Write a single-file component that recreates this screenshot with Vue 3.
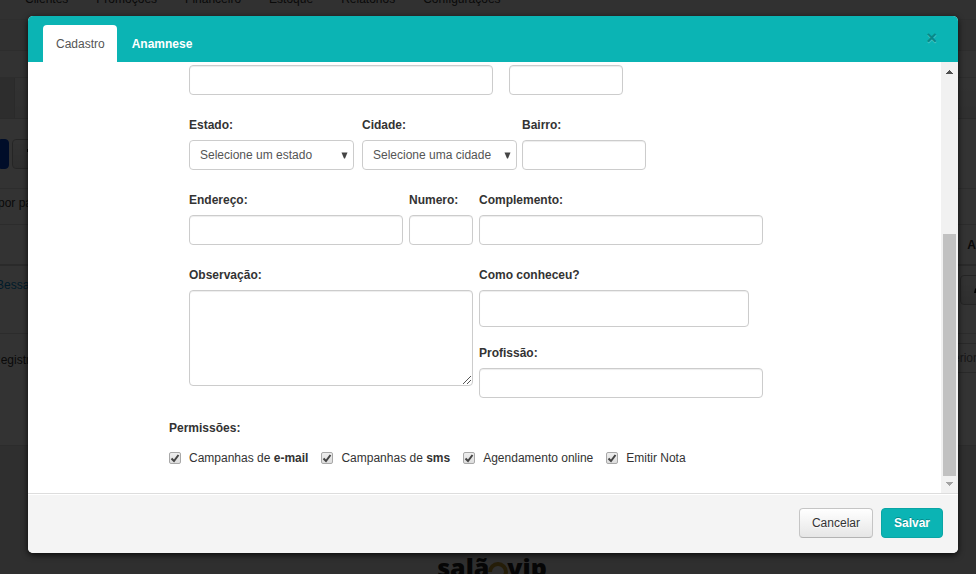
<script setup>
import { ref } from 'vue'

const menu = ['Clientes', 'Promoções', 'Financeiro', 'Estoque', 'Relatórios', 'Configurações']

const form = ref({
  contato: '',
  cep: '',
  estado: '',
  cidade: '',
  bairro: '',
  endereco: '',
  numero: '',
  complemento: '',
  observacao: '',
  origem: '',
  profissao: ''
})

const permissions = ref([
  { id: 'perm-email', text: 'Campanhas de ', strong: 'e-mail', checked: true },
  { id: 'perm-sms', text: 'Campanhas de ', strong: 'sms', checked: true },
  { id: 'perm-online', text: 'Agendamento online', strong: '', checked: true },
  { id: 'perm-nota', text: 'Emitir Nota', strong: '', checked: true }
])
</script>

<template>
  <div class="screen">
    <div class="page">
      <nav class="menu">
        <a v-for="(item, i) in menu" :key="item" href="#" :class="{ current: i === 0 }">{{ item }}</a>
      </nav>
      <div class="band band-plain"></div>
      <div class="band band-light"></div>
      <div class="toolbar"><span class="toolbar-tab"></span></div>
      <div class="actions">
        <button class="action primary" type="button" aria-label="Novo"></button>
        <button class="action" type="button" aria-label="Excluir">
          <svg width="14" height="14" viewBox="0 0 14 14"><path d="M2 3h3V1h4v2h4v3H2zM4 5h8l-1 8H4z" /></svg>
        </button>
      </div>
      <div class="length">por página</div>
      <div class="row head"><b>A</b></div>
      <div class="row item">
        <a href="#">Bessa</a>
        <button class="edit" type="button" aria-label="Editar">
          <svg width="14" height="14" viewBox="0 0 14 14"><path d="M1 13l1-4 7-7 4 4-7 7z" /></svg>
        </button>
      </div>
      <div class="row info">
        <span>Registros</span>
        <span class="pager">Anterior</span>
      </div>
      <footer class="brand">
        <span>salã</span>
        <svg width="22" height="24" viewBox="0 0 22 24"><path d="M3 15a8 8 0 1 1 16 0a8 8 0 0 1-8 7" /></svg>
        <span>vip</span>
      </footer>
    </div>

    <div class="backdrop">
      <section class="modal" role="dialog" aria-label="Cadastro">
        <header class="modal-head">
          <a class="tab active" href="#">Cadastro</a>
          <a class="tab" href="#">Anamnese</a>
          <button class="close" type="button" aria-label="Fechar">×</button>
        </header>

        <div class="modal-body">
          <form class="form">
            <div class="fields">
              <div class="line wide">
                <input v-model="form.contato" class="w304" type="text" aria-label="Contato" />
                <input v-model="form.cep" class="w114" type="text" aria-label="CEP" />
              </div>

              <div class="line places">
                <div class="field state">
                  <label for="estado">Estado:</label>
                  <div class="select">
                    <select id="estado" v-model="form.estado">
                      <option value="">Selecione um estado</option>
                    </select>
                    <svg width="7" height="7" viewBox="0 0 7 7"><path d="M0.500 0.500h6L4 6.500H3z" /></svg>
                  </div>
                </div>
                <div class="field city">
                  <label for="cidade">Cidade:</label>
                  <div class="select">
                    <select id="cidade" v-model="form.cidade">
                      <option value="">Selecione uma cidade</option>
                    </select>
                    <svg width="7" height="7" viewBox="0 0 7 7"><path d="M0.500 0.500h6L4 6.500H3z" /></svg>
                  </div>
                </div>
                <div class="field w124">
                  <label for="bairro">Bairro:</label>
                  <input id="bairro" v-model="form.bairro" type="text" />
                </div>
              </div>

              <div class="line">
                <div class="field w214">
                  <label for="endereco">Endereço:</label>
                  <input id="endereco" v-model="form.endereco" type="text" />
                </div>
                <div class="field w64">
                  <label for="numero">Numero:</label>
                  <input id="numero" v-model="form.numero" type="text" />
                </div>
                <div class="field w284">
                  <label for="complemento">Complemento:</label>
                  <input id="complemento" v-model="form.complemento" type="text" />
                </div>
              </div>

              <div class="line">
                <div class="field w284">
                  <label for="observacao">Observação:</label>
                  <div class="area">
                    <textarea id="observacao" v-model="form.observacao"></textarea>
                    <svg width="10" height="10" viewBox="0 0 10 10"><path d="M1 9L9 1M5 9L9 5" /></svg>
                  </div>
                </div>
                <div class="stack w284">
                  <div class="field">
                    <label for="origem">Como conheceu?</label>
                    <input id="origem" v-model="form.origem" class="tall" type="text" />
                  </div>
                  <div class="field">
                    <label for="profissao">Profissão:</label>
                    <input id="profissao" v-model="form.profissao" type="text" />
                  </div>
                </div>
              </div>
            </div>

            <fieldset class="permissions">
              <legend>Permissões:</legend>
              <div class="checks">
                <label v-for="p in permissions" :key="p.id" :for="p.id">
                  <span class="box">
                    <input :id="p.id" v-model="p.checked" type="checkbox" />
                    <svg v-if="p.checked" width="12" height="12" viewBox="0 0 12 12"><path d="M2.500 6.500L5 9L9.500 3" /></svg>
                  </span>
                  <span>{{ p.text }}<b v-if="p.strong">{{ p.strong }}</b></span>
                </label>
              </div>
            </fieldset>
          </form>

          <div class="scrollbar" aria-hidden="true">
            <svg class="up" width="7" height="4" viewBox="0 0 7 4"><path d="M3 0h1v1h1v1h1v1h1v1H0V3h1V2h1V1h1z" /></svg>
            <div class="thumb"></div>
            <svg class="down" width="7" height="4" viewBox="0 0 7 4"><path d="M0 0h7v1H6v1H5v1H4v1H3V3H2V2H1V1H0z" /></svg>
          </div>
        </div>

        <footer class="modal-foot">
          <button class="btn" type="button">Cancelar</button>
          <button class="btn save" type="button">Salvar</button>
        </footer>
      </section>
    </div>
  </div>
</template>

<style>
body {
  background: #e8e8e8;
  overflow: hidden;
}
</style>

<style scoped>
.screen {
  position: relative;
  height: 100vh;
  overflow: hidden;
  font: 12px/20px "Liberation Sans", Arial, sans-serif;
  color: #333;
}
.screen *,
.screen *::before {
  box-sizing: border-box;
}
a {
  text-decoration: none;
}
input,
select,
textarea,
button {
  margin: 0;
  font: inherit;
}

/* Page under the dialog */
.page {
  background: #fff;
}
.menu {
  display: flex;
  gap: 28px;
  height: 20px;
  padding-left: 25px;
  background: #f4f4f4;
  border-bottom: 1px solid #e4e4e4;
}
.menu a {
  height: 19px;
  margin-top: -11px;
  color: #333;
}
.band {
  border-bottom: 1px solid #e0e0e0;
}
.band-plain {
  height: 31px;
  background: #f0f0f0;
}
.band-light {
  height: 27px;
  background: #fafafa;
}
.toolbar {
  display: flex;
  height: 41px;
  background: linear-gradient(#fafafa, #eee);
  border-bottom: 1px solid #d8d8d8;
}
.toolbar-tab {
  width: 15px;
  background: #e0e0e0;
  border-right: 1px solid #d0d0d0;
}
.actions {
  display: flex;
  gap: 3px;
  height: 70px;
  padding-top: 20px;
  border-bottom: 1px solid #e0e0e0;
}
.action {
  width: 40px;
  height: 30px;
  padding: 4px 10px 0;
  background: linear-gradient(#fff, #e6e6e6);
  border: 1px solid #bbb;
  border-radius: 4px;
}
.action.primary {
  width: 9px;
  padding: 0;
  background: #0044cc;
  border-color: #0044cc;
  border-radius: 0 4px 4px 0;
}
.length {
  height: 36px;
  padding-top: 4px;
  margin-left: -2px;
  border-bottom: 1px solid #ddd;
}
.row {
  display: flex;
  justify-content: space-between;
  border-bottom: 1px solid #ddd;
}
.head {
  height: 41px;
  justify-content: flex-end;
  align-items: center;
  border-bottom: 2px solid #d0d0d0;
}
.item {
  height: 68px;
  padding-top: 9px;
  margin-left: -4px;
}
.item a {
  color: #08c;
}
.edit {
  width: 40px;
  height: 30px;
  margin-right: -24px;
  background: linear-gradient(#fff, #e6e6e6);
  border: 1px solid #bbb;
  border-radius: 4px;
}
.info {
  height: 112px;
  padding-top: 9px;
  margin-left: -8px;
}
.info span {
  padding-top: 7px;
}
.info .pager {
  height: 30px;
  margin-right: -14px;
  padding: 4px 12px;
  color: #777;
  border: 1px solid #ccc;
}
.brand {
  display: flex;
  justify-content: center;
  height: 140px;
  padding: 106px 0 0 8px;
  background: #e8e8e8;
  font: 800 25px/30px "Open Sans", sans-serif;
  color: #222;
}
.brand svg {
  margin: 5px -2px 0;
  fill: none;
  stroke: #b8902a;
  stroke-width: 4;
}

/* Dialog */
.backdrop {
  position: absolute;
  inset: 0;
  padding: 16px 18px 0 28px;
  background: rgba(0, 0, 0, 0.8);
}
.modal {
  overflow: hidden;
  background: #fff;
  border-radius: 5px;
  box-shadow: 0 2px 6px rgba(0, 0, 0, 0.8);
}
.modal-head {
  display: flex;
  align-items: flex-end;
  height: 46px;
  padding: 0 15px;
  background: #0bb4b4;
}
.tab {
  height: 37px;
  padding: 9px 12px 0 13px;
  font-weight: bold;
  color: #fff;
}
.tab + .tab {
  margin-left: 2px;
}
.tab.active {
  font-weight: normal;
  color: #555;
  background: #fff;
  border-radius: 4px 4px 0 0;
}
.close {
  align-self: flex-start;
  margin: 12px 6px 0 auto;
  padding: 0;
  background: none;
  border: 0;
  font-size: 18px;
  font-weight: bold;
  line-height: 20px;
  color: #088888;
  text-shadow: 0 1px 0 #4cc8c8;
}
.modal-body {
  display: flex;
}
.form {
  flex: 0 1 631px;
  margin: 0 auto;
  padding: 3px 0 25px;
}
.fields {
  display: flex;
  flex-direction: column;
  gap: 20px;
  padding-left: 20px;
}
.line {
  display: flex;
  gap: 6px;
}
.line.wide {
  gap: 16px;
}
.line.places {
  gap: 5px;
}
.field label {
  display: block;
  margin-bottom: 5px;
  font-weight: bold;
}
.field input,
.field select {
  width: 100%;
}
.form input[type="text"],
select,
textarea {
  display: block;
  height: 30px;
  padding: 4px 6px;
  color: #555;
  background: #fff;
  border: 1px solid #ccc;
  border-radius: 4px;
  box-shadow: inset 0 1px 1px rgba(0, 0, 0, 0.075);
}
.form input.tall {
  width: 270px;
  height: 37px;
}
.select,
.area,
.box {
  display: grid;
}
.select > *,
.area > *,
.box > * {
  grid-area: 1 / 1;
}
select {
  appearance: none;
  padding-left: 10px;
  box-shadow: none;
}
.select svg {
  align-self: center;
  justify-self: end;
  margin-right: 6px;
  fill: #444;
  pointer-events: none;
}
textarea {
  width: 100%;
  height: 96px;
  resize: none;
}
.area svg {
  align-self: end;
  justify-self: end;
  margin: 1px;
  fill: none;
  stroke: #555;
  pointer-events: none;
}
.stack {
  display: flex;
  flex-direction: column;
  gap: 16px;
}
.w304 { width: 304px; }
.w284 { width: 284px; }
.w214 { width: 214px; }
.w124 { width: 124px; }
.w114 { width: 114px; }
.w64 { width: 64px; }
.state {
  width: 165px;
  margin-right: 3px;
}
.city {
  width: 155px;
}
.permissions {
  margin: 20px 0 0;
  padding: 0;
  border: 0;
}
legend {
  padding: 0;
  font-weight: bold;
}
.checks {
  display: flex;
  gap: 13px;
  padding-top: 10px;
}
.checks label {
  display: flex;
  align-items: center;
  gap: 8px;
}
.box input {
  appearance: none;
  width: 12px;
  height: 12px;
  background: linear-gradient(#eee, #ddd);
  border: 1px solid #a8a8a8;
  border-radius: 2px;
}
.box svg {
  fill: none;
  stroke: #444;
  stroke-width: 2;
  pointer-events: none;
}
.scrollbar {
  display: flex;
  flex-direction: column;
  align-items: center;
  width: 17px;
  padding: 8px 0 7px;
  background: #f1f1f1;
}
.up {
  fill: #505050;
}
.down {
  fill: #a3a3a3;
}
.thumb {
  width: 13px;
  height: 242px;
  margin: auto 0 6px;
  background: #c1c1c1;
}
.modal-foot {
  display: flex;
  justify-content: flex-end;
  gap: 8px;
  padding: 14px 15px 15px;
  background: #f4f4f4;
  border-top: 1px solid #ddd;
  box-shadow: inset 0 1px 0 #fff;
}
.btn {
  height: 30px;
  padding: 4px 12px;
  line-height: 20px;
  color: #333;
  background: linear-gradient(#fff, #e6e6e6);
  border: 1px solid #c5c5c5;
  border-bottom-color: #b3b3b3;
  border-radius: 4px;
  text-shadow: 0 1px 1px rgba(255, 255, 255, 0.75);
}
.btn.save {
  font-weight: bold;
  color: #fff;
  background: #0bb4b4;
  border-color: #0aa5a5;
  text-shadow: 0 -1px 0 rgba(0, 0, 0, 0.25);
}
</style>
